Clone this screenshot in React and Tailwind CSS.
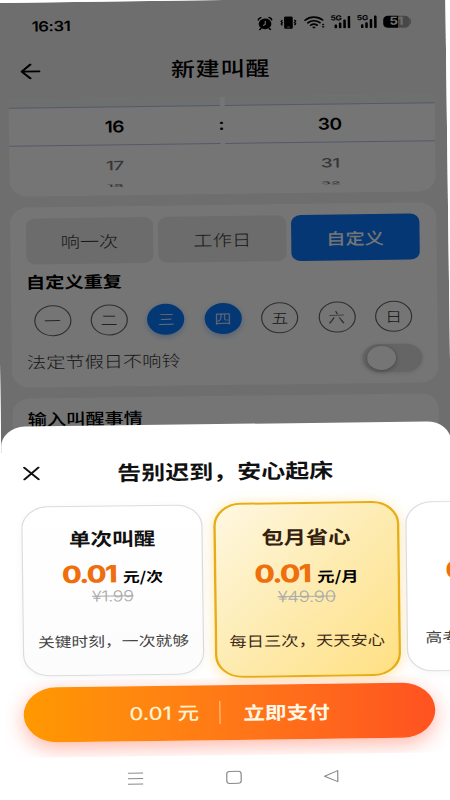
const days = ['一', '二', '三', '四', '五', '六', '日'];
const activeDays = ['三', '四'];

const Signal = () => (
  <div className="relative h-[13px] w-[17px]">
    <span className="absolute -top-px left-0 font-['Inter'] text-[7px] leading-[8px] font-bold tracking-tight">5G</span>
    <svg viewBox="0 0 17 13" className="h-full w-full" fill="currentColor">
      <rect x="3.4" y="9" width="2.1" height="4" rx="0.8" />
      <rect x="7" y="7" width="2.1" height="6" rx="0.8" />
      <rect x="10.7" y="4" width="2.1" height="9" rx="0.8" />
      <rect x="14.4" y="0.5" width="2.1" height="12.5" rx="0.8" />
    </svg>
  </div>
);

const StatusBar = () => (
  <div className="flex h-[47px] items-center pr-[29px] pl-[30px] text-black">
    <span className="flex-1 font-['Inter'] text-[14px] font-semibold tracking-[-0.4px]">16:31</span>
    <div className="flex items-center">
      {/* alarm */}
      <svg viewBox="0 0 13 14" className="h-[14px] w-[13px]" fill="none" stroke="currentColor" strokeLinecap="round">
        <circle cx="6.5" cy="7.4" r="5.3" fill="currentColor" stroke="none" />
        <path d="M0.9 3.4C1.2 2.2 2 1.4 3.1 1.1M12.1 3.4C11.8 2.2 11 1.4 9.9 1.1M3 12l-.9 1.1M10 12l.9 1.1" strokeWidth="1.4" />
        <path d="M6.7 4.8v2.9L5.2 9" className="stroke-[#f0f0f0]" strokeWidth="1" />
      </svg>
      {/* vibrate */}
      <svg viewBox="0 0 14 13" className="ml-[6px] h-[13px] w-[14px]" fill="none" stroke="currentColor">
        <rect x="3.4" y="0.4" width="7.2" height="12.2" rx="1.2" fill="currentColor" stroke="none" />
        <path d="M5.8 10.9h2.4" className="stroke-[#bbb]" strokeWidth="0.8" />
        <path d="M2 3.8L.9 5 2 6.4.9 7.8 2 9.1M12 3.8L13.1 5 12 6.4l1.1 1.4L12 9.1" strokeWidth="1.1" />
      </svg>
      {/* wifi */}
      <svg viewBox="0 0 18 13" className="ml-[6px] h-[13px] w-[18px]" fill="none" stroke="currentColor" strokeWidth="1.6" strokeLinecap="round">
        <path d="M0.9 4.3C5 .3 11.4.3 15.5 4.3M3.2 6.9c2.9-2.7 7.1-2.7 10 0M5.5 9.4c1.6-1.4 3.8-1.4 5.4 0" />
        <path d="M6.4 11h3.6l-1.8 1.9z" fill="currentColor" stroke="none" />
        <path d="M14.6 9.4l1.3-1.6 1.3 1.6zM14.6 10.6l1.3 1.6 1.3-1.6z" fill="currentColor" stroke="none" />
      </svg>
      <div className="ml-[4px]"><Signal /></div>
      <div className="ml-[5px]"><Signal /></div>
      <div className="ml-[5px] flex items-center">
        <div className="flex h-[12px] w-[22px] items-center justify-center rounded-[4px] bg-linear-to-r from-black from-55% to-[#9c9c9c] to-55% font-['Inter'] text-[11px] leading-none font-bold">
          <span className="text-white">5</span>
          <span className="text-[#f0f0f0]">1</span>
        </div>
        <div className="h-[6px] w-[1px] rounded-r bg-[#9c9c9c]" />
      </div>
    </div>
  </div>
);

const WheelColumn = ({ value, next, last }) => (
  <div className="flex flex-1 flex-col items-center font-['Inter'] text-[16px] font-semibold tracking-[-0.5px] text-black">
    <div className="h-[9px] w-full border-b border-[#b9c0ee] bg-[#f0f3f1]" />
    <div className="flex h-[38px] w-full items-center justify-center border-b border-[#b9c0ee]">{value}</div>
    <div className="mt-[12px] flex h-[16px] scale-y-80 items-center font-medium text-[#777]">{next}</div>
    <div className="mt-[4px] flex h-[16px] scale-y-25 items-center text-[14px] font-medium text-[#777]">{last}</div>
  </div>
);

const TimePicker = () => (
  <div className="mx-[10px] flex h-[97px] rounded-b-[15px] bg-white">
    <WheelColumn value="16" next="17" last="18" />
    <div className="w-[4px] pt-[17px] text-center font-['Inter'] text-[16px] leading-[20px] font-semibold text-black">
      <span className="-ml-px">:</span>
    </div>
    <WheelColumn value="30" next="31" last="32" />
  </div>
);

const RepeatCard = () => (
  <div className="mx-[10px] mt-[11px] h-[180px] rounded-[15px] bg-white pt-[11px] pr-[14.5px] pl-[12.5px]">
    <div className="flex gap-[4px] text-[16px] font-light text-[#333]">
      <div className="flex h-[46px] flex-1 items-center justify-center rounded-[8px] bg-[#ececec]">响一次</div>
      <div className="flex h-[46px] flex-1 items-center justify-center rounded-[8px] bg-[#ececec]">工作日</div>
      <div className="flex h-[46px] flex-1 items-center justify-center rounded-[8px] bg-[#0a78fa] font-medium text-white">自定义</div>
    </div>
    <h3 className="mt-[5px] text-[16px] leading-[24px] font-bold text-black">自定义重复</h3>
    <div className="mt-[12px] mr-[6.5px] ml-[6px] flex justify-between">
      {days.map((day) => (
        <div
          key={day}
          className={
            activeDays.includes(day)
              ? 'flex h-[31px] w-[31px] items-center justify-center rounded-full bg-[#0a7aff] text-[14px] font-light text-white shadow-[0_2px_6px_rgba(10,122,255,0.35)]'
              : 'flex h-[31px] w-[31px] items-center justify-center rounded-full border border-[#666] text-[14px] font-light text-[#222]'
          }
        >
          {day}
        </div>
      ))}
    </div>
    <div className="mt-[12px] -mr-[1.5px] flex items-center justify-between">
      <span className="-mt-[3px] text-[16px] font-light text-[#333]">法定节假日不响铃</span>
      <div className="flex h-[28px] w-[50px] items-center rounded-full bg-[#dcdcdc] pl-[3.5px] shadow-[0_1px_5px_rgba(0,0,0,0.12)]">
        <div className="h-[24px] w-[24px] rounded-full bg-white shadow-[0_1px_4px_rgba(0,0,0,0.35)]" />
      </div>
    </div>
  </div>
);

const Price = ({ amount, unit }) => (
  <div className="flex items-baseline">
    <span className="font-['Inter'] text-[24px] leading-[26px] font-extrabold tracking-[-1.5px] text-[#ee6f0c]">{amount}</span>
    <span className="ml-[6px] text-[14px] leading-[26px] font-bold text-black">{unit}</span>
  </div>
);

const PaySheet = () => (
  <div className="absolute inset-x-0 bottom-0 flex h-[376px] flex-col overflow-hidden rounded-t-[20px] bg-white">
    <div className="flex h-[79px] items-center pt-[15px] pl-[17.5px]">
      <svg viewBox="0 0 14 14" className="h-[14px] w-[14px]" fill="none" stroke="#111" strokeWidth="1.8" strokeLinecap="round">
        <path d="M1 1l12 12M13 1L1 13" />
      </svg>
      <h2 className="ml-[65px] text-[20px] leading-[30px] font-bold whitespace-nowrap text-[#111]">告别迟到，安心起床</h2>
    </div>

    <div className="flex h-[175px] items-center pl-[16px]">
      <div className="-mt-[3px] flex h-[170px] w-[151px] shrink-0 flex-col items-center rounded-[22px] border border-[#dcdcdc] bg-linear-to-b from-white to-[#fcfcfc] pt-[17px] shadow-[0_2px_8px_rgba(0,0,0,0.04)]">
        <div className="text-[18px] leading-[28px] font-bold text-[#111]">单次叫醒</div>
        <div className="mt-[10px]"><Price amount="0.01" unit="元/次" /></div>
        <div className="-mt-[3.5px] font-['Inter'] text-[15px] leading-[20px] font-light tracking-[-0.3px] text-[#aaa] line-through">¥1.99</div>
        <div className="mt-[23px] text-[14px] leading-[22px] text-[#444]">关键时刻，一次就够</div>
      </div>

      <div className="ml-[8.5px] flex h-[175px] w-[155px] shrink-0 flex-col items-center rounded-[23px] border-2 border-[#e6ae14] bg-linear-to-br from-[#fff8e2] via-[#fdebb0] to-[#ffe082] pt-[17.5px] shadow-[0_2px_12px_rgba(255,190,40,0.4)]">
        <div className="text-[18.5px] leading-[28px] font-bold text-[#33200f]">包月省心</div>
        <div className="mt-[11.5px] origin-center scale-[1.03]"><Price amount="0.01" unit="元/月" /></div>
        <div className="-mt-[2.5px] font-['Inter'] text-[15.5px] leading-[20px] font-light tracking-[-0.3px] text-[#aaa] line-through">¥49.90</div>
        <div className="mt-[22.5px] text-[14.4px] leading-[22px] whitespace-nowrap text-[#3d2a18]">每日三次，天天安心</div>
      </div>

      <div className="-mt-[3px] ml-[5.5px] flex h-[170px] w-[151px] shrink-0 flex-col rounded-[22px] border border-[#dcdcdc] bg-white pt-[55px] shadow-[0_2px_8px_rgba(0,0,0,0.04)]">
        <div className="pl-[32px] font-['Inter'] text-[24px] leading-[26px] font-extrabold text-[#ee6f0c]">0</div>
        <div className="mt-[41.5px] pl-[14.5px] text-[14px] leading-[22px] text-[#444]">高考</div>
      </div>
    </div>

    <div className="h-[77px] overflow-hidden pt-[7px] pl-[16px]">
      <button className="flex h-[54.5px] w-[343px] items-center justify-center rounded-full bg-linear-to-r from-[#ff9800] to-[#ff5220] text-[18px] text-[#fff3d0] shadow-[0_6px_18px_rgba(255,82,50,0.42)]">
        <span className="font-['Inter','Noto_Sans_CJK_SC',sans-serif] font-medium">0.01 元</span>
        <span className="mr-[19px] ml-[17px] h-[23px] w-px bg-[#ffc27a]" />
        <span className="font-bold text-[#fff8e6]">立即支付</span>
      </button>
    </div>

    <div className="flex h-[45px] items-center pl-[102px] text-[#888]">
      <svg viewBox="0 0 13 13" className="h-[13px] w-[13px]" fill="none" stroke="currentColor">
        <path d="M0 1h13M0 6.5h13M0 12h13" />
      </svg>
      <div className="ml-[69px] h-[13px] w-[13px] rounded-[3px] border border-[#888]" />
      <svg viewBox="0 0 13 13" className="ml-[68px] h-[13px] w-[13px]" fill="none" stroke="currentColor" strokeLinejoin="round">
        <path d="M12 1v11L1 6.5z" />
      </svg>
    </div>
  </div>
);

const App = () => {
  return (
    <div className="flex h-[800px] w-[450px] justify-center overflow-hidden bg-white font-['Noto_Sans_CJK_SC',sans-serif]">
      <div className="relative h-[800px] w-[375px] shrink-0 scale-x-120 -rotate-[0.74deg] overflow-hidden">
        <div className="h-[450px] overflow-hidden bg-[#f0f0f0]">
          <StatusBar />
          <div className="flex h-[50px] items-center pl-[20px]">
            <svg viewBox="0 0 17 16" className="-mt-[6px] h-[16px] w-[17px]" fill="none" stroke="#000" strokeWidth="1.8" strokeLinecap="round" strokeLinejoin="round">
              <path d="M8.5 1L1.2 8l7.3 7M1.2 8H16" />
            </svg>
            <h1 className="-mt-[8px] flex-1 pr-[38px] text-center text-[20px] font-medium tracking-[0.7px] text-black">新建叫醒</h1>
          </div>
          <TimePicker />
          <RepeatCard />
          <div className="mx-[10px] mt-[11px] h-[120px] rounded-[15px] bg-white px-[12.5px] pt-[8px]">
            <h3 className="text-[16px] leading-[24px] font-medium text-black">输入叫醒事情</h3>
          </div>
        </div>

        <div className="absolute inset-x-0 top-0 h-[450px] bg-black/54" />
        <PaySheet />
      </div>
    </div>
  );
};

export default App;
